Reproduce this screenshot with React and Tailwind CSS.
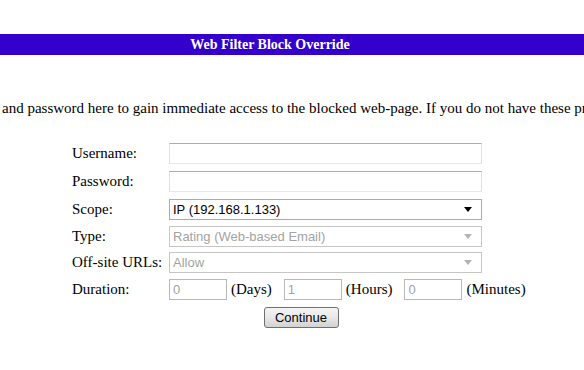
import React from "react";

const serif = "font-['Liberation_Serif','Times_New_Roman',serif]";
const sans = "font-['Liberation_Sans',Arial,sans-serif]";

function Arrow({ disabled }) {
  return (
    <svg width="8" height="5" viewBox="0 0 8 5" className="shrink-0">
      <path d="M0 0 H8 L4 5 Z" fill={disabled ? "#b4b4b4" : "#000000"} />
    </svg>
  );
}

function FakeSelect({ value, disabled }) {
  return (
    <div
      className={`flex h-[21px] w-[313px] items-center justify-between border bg-white pl-[3px] pr-[9px] text-[13px] leading-[15px] ${sans} ${
        disabled ? "border-[#c6c6c6] text-[#a3a3a3]" : "border-[#ababab] text-black"
      }`}
    >
      <span>{value}</span>
      <Arrow disabled={disabled} />
    </div>
  );
}

function TextBox({ type = "text" }) {
  return (
    <input
      type={type}
      className="block h-[21px] w-[313px] border border-[#e3e9ef] border-t-[#abadb3] border-x-[#dbdfe6] bg-white outline-none"
    />
  );
}

function SmallBox({ value }) {
  return (
    <input
      readOnly
      value={value}
      className={`block h-[21px] w-[58px] border border-[#b8b8b8] bg-white px-[3px] text-[13px] leading-[15px] text-[#a3a3a3] outline-none ${sans}`}
    />
  );
}

function Row({ label, children, className = "" }) {
  return (
    <div className={`flex h-[21px] items-center ${className}`}>
      <div className="w-[97px] text-[15px] leading-[17px] text-black">{label}</div>
      {children}
    </div>
  );
}

export default function App() {
  return (
    <div className={`h-[370px] w-[584px] overflow-hidden bg-white ${serif}`}>
      <div className="mt-[34px] flex h-[21px] items-center bg-[#3300cc]">
        <div className="w-[540px] text-center text-[14px] leading-[16px] font-bold text-white">
          Web Filter Block Override
        </div>
      </div>

      <p className="mt-[45px] ml-[2px] whitespace-nowrap text-[15px] leading-[17px] text-black">
        and password here to gain immediate access to the blocked web-page. If you do not have these privileges, please contact your administrator.
      </p>

      <div className="ml-[72px] mt-[26px] flex flex-col">
        <Row label="Username:">
          <TextBox />
        </Row>
        <Row label="Password:" className="mt-[7px]">
          <TextBox type="password" />
        </Row>
        <Row label="Scope:" className="mt-[7px]">
          <FakeSelect value="IP (192.168.1.133)" />
        </Row>
        <Row label="Type:" className="mt-[6px]">
          <FakeSelect value="Rating (Web-based Email)" disabled />
        </Row>
        <Row label="Off-site URLs:" className="mt-[5px]">
          <FakeSelect value="Allow" disabled />
        </Row>
        <Row label="Duration:" className="mt-[6px]">
          <div className="flex items-center text-[15px] leading-[17px] text-black">
            <SmallBox value="0" />
            <span className="ml-[4px]">(Days)</span>
            <span className="ml-[12px]">
              <SmallBox value="1" />
            </span>
            <span className="ml-[4px]">(Hours)</span>
            <span className="ml-[12px]">
              <SmallBox value="0" />
            </span>
            <span className="ml-[4px]">(Minutes)</span>
          </div>
        </Row>
        <div className="mt-[7px] flex w-[458px] justify-center">
          <button
            className={`h-[21px] w-[75px] rounded-[3px] border border-[#707070] bg-gradient-to-b from-[#f4f4f4] via-[#e8e8e8] to-[#d2d2d2] text-[13px] leading-[15px] text-black ${sans}`}
          >
            Continue
          </button>
        </div>
      </div>
    </div>
  );
}
